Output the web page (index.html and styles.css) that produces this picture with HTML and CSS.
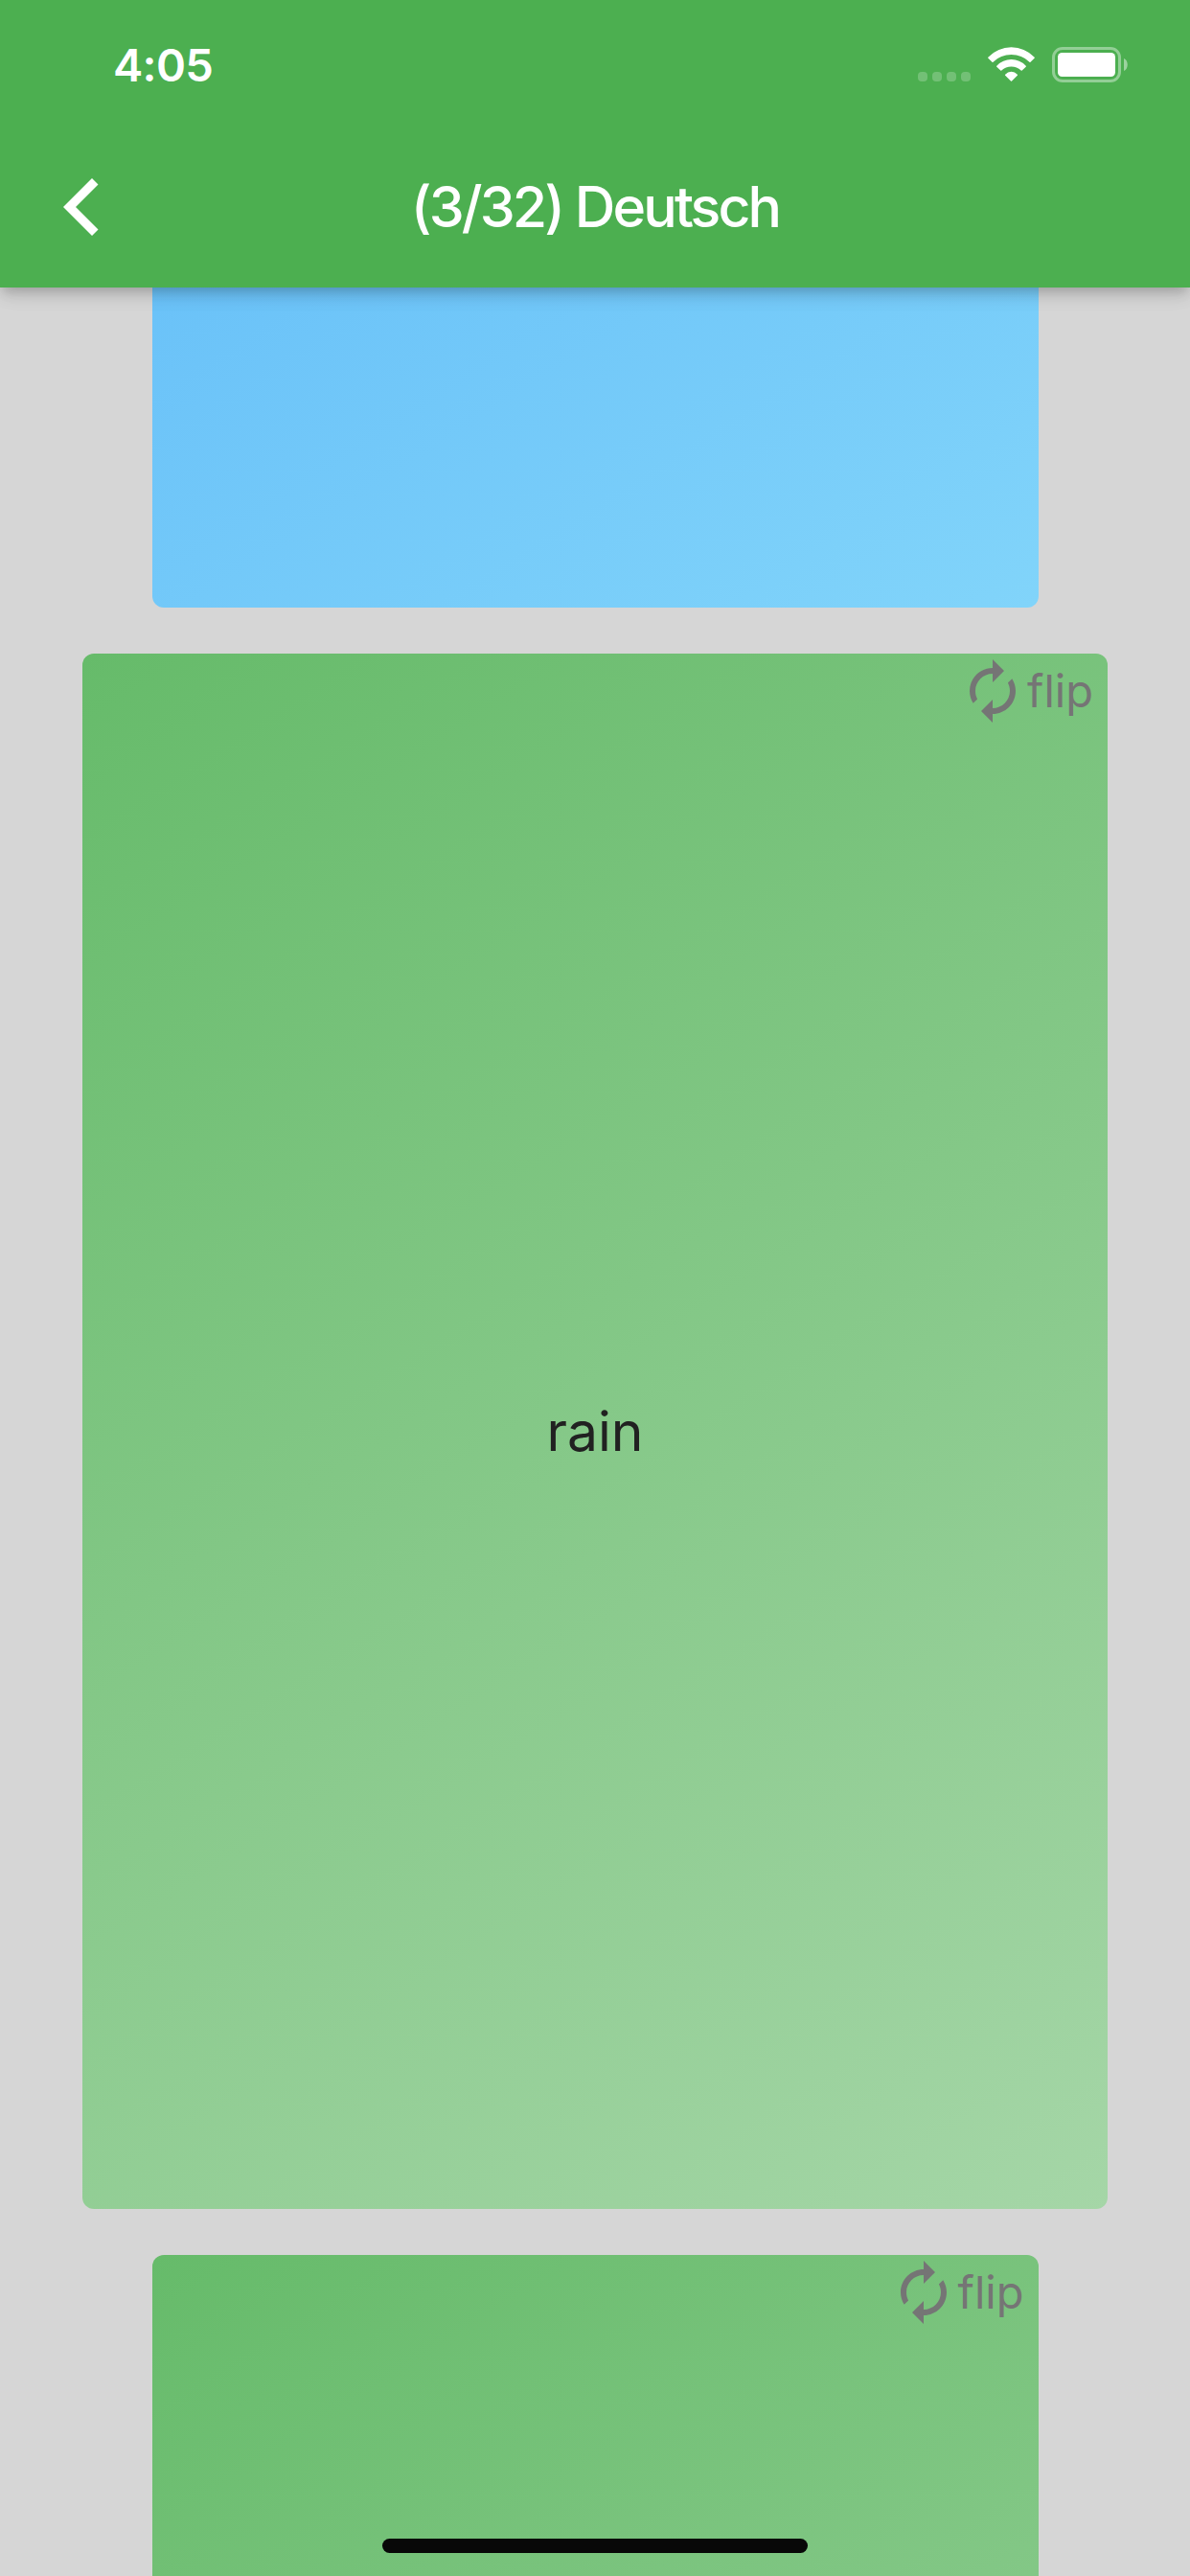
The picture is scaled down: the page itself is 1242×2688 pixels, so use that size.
FILE: index.html
```html
<!DOCTYPE html>
<html lang="en">
<head>
<meta charset="utf-8">
<title>(3/32) Deutsch</title>
<link rel="stylesheet" href="styles.css">
</head>
<body>
<svg class="defs" width="0" height="0" aria-hidden="true">
  <symbol id="autorenew" viewBox="0 0 24 24"><path d="M12 6v3l4-4-4-4v3c-4.42 0-8 3.58-8 8 0 1.57.46 3.03 1.24 4.26L6.7 14.8c-.45-.83-.7-1.79-.7-2.8 0-3.31 2.69-6 6-6zm6.76 1.74L17.3 9.2c.44.84.7 1.79.7 2.8 0 3.31-2.69 6-6 6v-3l-4 4 4 4v-3c4.42 0 8-3.58 8-8 0-1.57-.46-3.03-1.24-4.26z"/></symbol>
</svg>
<div class="screen">
  <header class="appbar">
    <div class="status">
      <span class="time">4:05</span>
      <div class="indicators">
        <div class="signal"><i></i><i></i><i></i><i></i></div>
        <svg class="wifi" width="49" height="37" viewBox="0 0 49 37">
          <g fill="#fff" stroke="#fff" stroke-width="1.5" stroke-linejoin="round">
            <path d="M.9 11.3C14.3-2.4 34.7-2.4 48.1 11.3L44 15.2C33.2 4.7 15.8 4.7 5 15.2Z"/>
            <path d="M9.800 20.200C18.200 11.700 30.800 11.700 39.200 20.200L35.200 24C29.200 18.300 19.800 18.300 13.800 24Z"/>
            <path d="M18.700 29.200C22 25.600 27 25.600 30.300 29.200L24.500 35Z"/>
          </g>
        </svg>
        <svg class="battery" width="80" height="37" viewBox="0 0 80 37">
          <rect x="1.500" y="1.500" width="69" height="34" rx="9.500" fill="none" stroke="#fff" stroke-opacity=".4" stroke-width="3"/>
          <rect x="6" y="6" width="60" height="25" rx="4.500" fill="#fff"/>
          <path d="M75 12C80 14 80 23 75 25Z" fill="#fff" fill-opacity=".45"/>
        </svg>
      </div>
    </div>
    <nav class="toolbar">
      <svg class="back" width="38" height="62" viewBox="0 0 38 62"><path fill="#fff" d="M31 1 37.500 7.500 14 31 37.500 54.500 31 61 1 31Z"/></svg>
      <h1 class="title">(3/32) Deutsch</h1>
    </nav>
  </header>
  <main class="deck">
    <section class="card side blue"></section>
    <section class="card current green">
      <div class="flip"><svg class="flip-icon"><use href="#autorenew"/></svg><span>flip</span></div>
      <p class="word">rain</p>
    </section>
    <section class="card side green">
      <div class="flip"><svg class="flip-icon"><use href="#autorenew"/></svg><span>flip</span></div>
    </section>
  </main>
  <div class="home"></div>
</div>
</body>
</html>
```
FILE: styles.css
```css
* { box-sizing: border-box; }
body {
  margin: 0;
  background: #d6d6d6;
  font-family: Inter, "Liberation Sans", sans-serif;
}
.defs { display: none; }
.screen {
  position: relative;
  display: flex;
  flex-direction: column;
  width: 1242px;
  height: 2688px;
  overflow: hidden;
}
.appbar {
  position: relative;
  z-index: 1;
  flex: none;
  height: 300px;
  background: #4caf50;
  color: #fff;
  box-shadow: 0 6px 12px -3px rgba(0,0,0,.2), 0 12px 15px 0 rgba(0,0,0,.06), 0 3px 30px 0 rgba(0,0,0,.05);
}
.status {
  display: flex;
  justify-content: space-between;
  height: 132px;
  padding: 49px 64px 0 118px;
}
.time { font-size: 47px; line-height: 38px; font-weight: 600; letter-spacing: -.7px; }
.indicators { display: flex; }
.signal { display: flex; gap: 5px; padding-top: 26px; margin-right: 18px; }
.signal i { width: 10px; height: 10px; border-radius: 4px; background: rgba(255,255,255,.22); }
.wifi { margin-right: 18px; }
.toolbar {
  display: grid;
  grid-template-columns: 103px 1fr 103px;
  align-items: center;
  height: 168px;
}
.back { justify-self: end; }
.title {
  margin: 0;
  text-align: center;
  font-size: 59px;
  line-height: 70px;
  font-weight: 550;
  letter-spacing: -2.9px;
}
.deck {
  flex: 1;
  min-height: 0;
  display: flex;
  flex-direction: column;
  align-items: center;
  justify-content: center;
  gap: 48px;
  padding-bottom: 1px;
}
.card {
  flex: none;
  display: flex;
  flex-direction: column;
  border-radius: 12px;
}
.current { width: 1070px; height: 1623px; }
.side { width: 925px; height: 1403px; }
.green { background: linear-gradient(147.500deg, #66bb6a, #a5d6a7); }
.blue { background: linear-gradient(147.500deg, #50adf6, #81d4fa); }
.flip {
  display: flex;
  justify-content: flex-end;
  align-items: center;
  height: 78px;
  padding-right: 15px;
  color: #757575;
  font-size: 47px;
  line-height: 60px;
}
.flip span { width: 69px; }
.flip-icon { flex: none; width: 72px; height: 72px; fill: #757575; }
.word {
  margin: auto 0;
  padding-bottom: 78px;
  text-align: center;
  color: #212121;
  font-size: 57px;
  line-height: 70px;
}
.home {
  position: absolute;
  left: 399px;
  bottom: 24px;
  width: 444px;
  height: 15px;
  border-radius: 8px;
  background: #080808;
}
```
